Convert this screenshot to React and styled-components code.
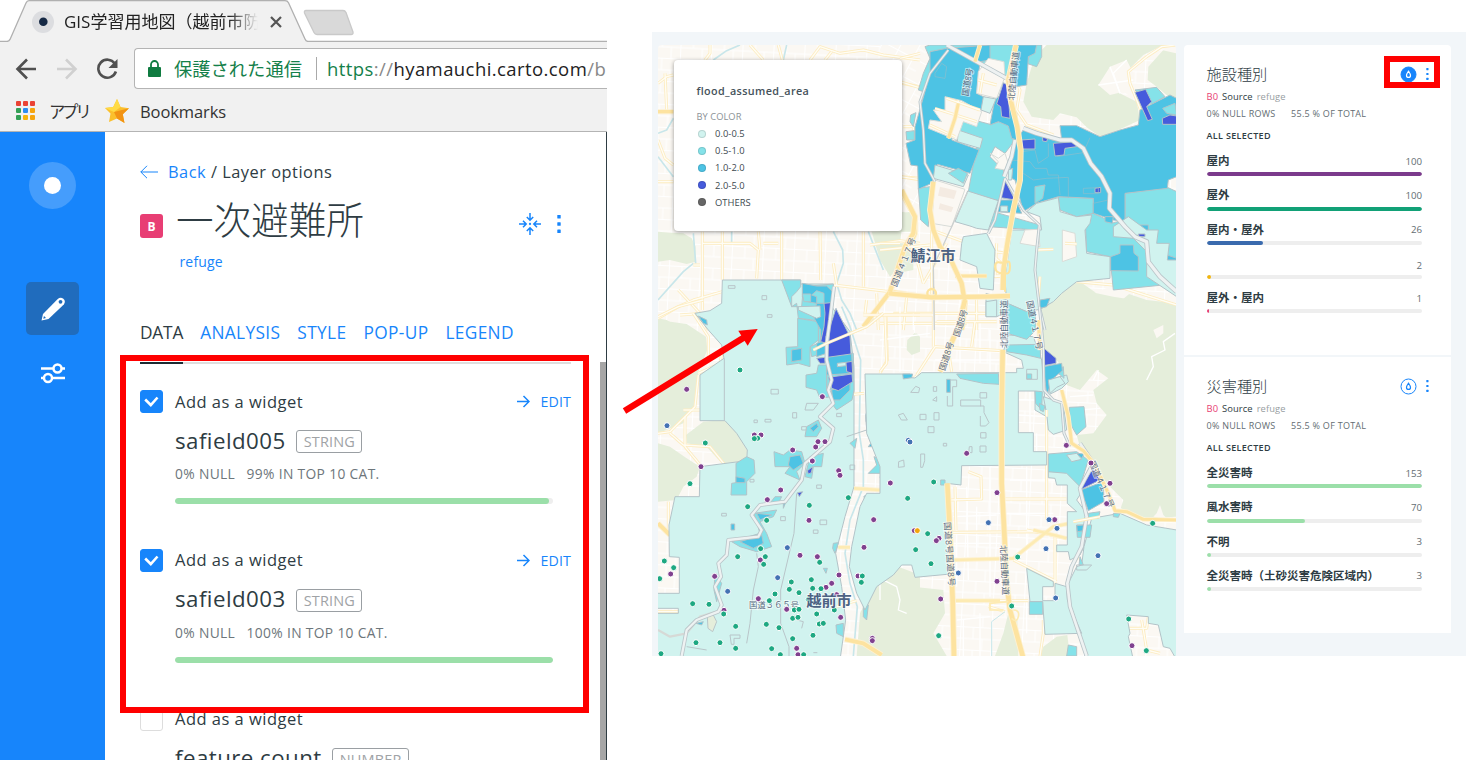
import React from "react";
import styled, { createGlobalStyle } from "styled-components";

const SANS = `"Open Sans", "Noto Sans CJK JP", sans-serif`;
const BLUE = "#1785fb";
const INK = "#2e3c43";

const Global = createGlobalStyle`
  * { box-sizing: border-box; }
  body { margin: 0; background: #fff; font-family: ${SANS}; color: ${INK}; }
  svg { flex: none; }
`;

const Page = styled.div`
  position: relative;
  display: flex;
  align-items: flex-start;
  width: 1466px;
  height: 760px;
  overflow: hidden;
`;

/* ---------- browser window ---------- */

const Browser = styled.section`
  display: flex;
  flex-direction: column;
  width: 607px;
  height: 760px;
  overflow: hidden;
`;

const TabStrip = styled.div`
  display: grid;
  height: 42px;
  > * { grid-area: 1 / 1; }
`;

const TabContent = styled.div`
  display: flex;
  align-items: center;
  padding-left: 32px;
  height: 43px;
`;

const TabTitle = styled.div`
  width: 194px;
  margin: 0 12px 0 10px;
  overflow: hidden;
  white-space: nowrap;
  font-size: 17px;
  line-height: 26px;
  color: #222;
  mask-image: linear-gradient(90deg, #000 85%, transparent 100%);
`;

const Toolbar = styled.div`
  display: flex;
  align-items: center;
  height: 53px;
  padding: 0 0 0 15px;
  background: #f1f1f1;
`;

const NavIcon = styled.svg`
  width: 22px;
  height: 22px;
  margin-right: ${(p) => p.$gap}px;
  fill: none;
  stroke: ${(p) => p.$color || "#505050"};
  stroke-width: 2.6;
`;

const Omnibox = styled.div`
  display: flex;
  align-items: center;
  flex: 1;
  min-width: 0;
  height: 41px;
  padding-left: 13px;
  border: 1px solid #b4b4b4;
  border-width: 1px 0 1px 1.5px;
  border-radius: 4px 0 0 4px;
  background: #fff;
  white-space: nowrap;
  overflow: hidden;
`;

const Secure = styled.span`
  margin-left: 13px;
  padding-right: 14px;
  border-right: 1px solid #aaa;
  font-size: 18.3px;
  line-height: 23px;
  color: #14804a;
`;

const Url = styled.span`
  margin-left: 10px;
  font-size: 18.5px;
  letter-spacing: 0.42px;
  color: #888;
  b { font-weight: 400; color: #222; }
  i { font-style: normal; color: #14804a; }
`;

const Bookmarks = styled.div`
  display: flex;
  align-items: center;
  height: 37px;
  padding: 0 0 4px 16px;
  border-bottom: 1px solid #b4b4b4;
  background: #f1f1f1;
  font-size: 16.5px;
  color: #333;
`;

const AppsGrid = styled.div`
  display: grid;
  grid-template-columns: repeat(3, 5px);
  gap: 2px;
  margin-top: -2px;
  i { height: 5px; border-radius: 1px; }
`;

const AppsLabel = styled.span`
  width: 39px;
  margin: 0 17px 0 14px;
  letter-spacing: -3.4px;
  white-space: nowrap;
`;

const BookmarkLabel = styled.span`
  margin-left: 11px;
  letter-spacing: -0.1px;
`;

const Builder = styled.div`
  display: flex;
  flex: 1;
  min-height: 0;
`;

const SideBar = styled.nav`
  display: flex;
  flex-direction: column;
  align-items: center;
  width: 105px;
  padding-top: 30px;
  background: ${BLUE};
`;

const Brand = styled.div`
  display: grid;
  place-items: center;
  width: 47px;
  height: 47px;
  margin-bottom: 73px;
  border-radius: 50%;
  background: #459dfc;
  i { width: 17px; height: 17px; border-radius: 50%; background: #fff; }
`;

const SideButton = styled.div`
  display: grid;
  place-items: center;
  width: 53px;
  height: 53px;
  margin-bottom: 11px;
  border-radius: 5px;
  background: ${(p) => (p.$active ? "#206cbd" : "transparent")};
`;

const Panel = styled.main`
  flex: 1;
  display: flex;
  flex-direction: column;
  min-width: 0;
  border-right: 1px solid ${INK};
`;

const PanelHead = styled.header`
  display: flex;
  flex-direction: column;
  height: 230px;
  padding: 27px 35px 0;
`;

const Crumb = styled.div`
  display: flex;
  align-items: center;
  height: 25px;
  font-size: 16.4px;
  letter-spacing: 0.5px;
  white-space: pre;
  a { color: ${BLUE}; }
  svg { margin-right: 10px; }
`;

const TitleRow = styled.div`
  display: flex;
  align-items: center;
  height: 50px;
  margin-top: 11px;
`;

const LayerBadge = styled.span`
  display: grid;
  place-items: center;
  width: 23px;
  height: 24px;
  margin: 12px 13px 0 0;
  border-radius: 3px;
  background: #e83e74;
  color: #fff;
  font-size: 12px;
  font-weight: 700;
`;

const Title = styled.h1`
  flex: 1;
  margin: 0;
  font-size: 37.6px;
  line-height: 50px;
  font-weight: 300;
`;

const TitleActions = styled.div`
  display: flex;
  align-items: center;
  gap: 16px;
  margin: 8px 10px 0 0;
`;

const SourceLink = styled.div`
  height: 22px;
  margin: 6px 0 0 39.5px;
  font-size: 14px;
  line-height: 22px;
  letter-spacing: 0.15px;
  color: ${BLUE};
`;

const Tabs = styled.div`
  display: flex;
  gap: 17px;
  margin-top: 48px;
  font-size: 17.3px;
  line-height: 24px;
  white-space: nowrap;
`;

const TabItem = styled.span`
  color: ${(p) => (p.$on ? INK : BLUE)};
  letter-spacing: ${(p) => (p.$on ? -0.2 : 0.36)}px;
`;

const Scroll = styled.div`
  display: flex;
  flex: 1;
  min-height: 0;
`;

const FieldList = styled.div`
  flex: 1;
  padding: 0 29px 0 35px;
  overflow: hidden;
`;

const Rule = styled.div`
  height: 2px;
  background: linear-gradient(90deg, #1d2b33 43px, #dedede 43px);
`;

const ScrollThumb = styled.div`
  width: 6px;
  background: #a6a6a6;
`;

const Field = styled.section`
  height: 158.8px;
  padding-top: 25.5px;
`;

const FieldTop = styled.div`
  display: flex;
  align-items: center;
  height: 24px;
`;

const Check = styled.span`
  display: grid;
  place-items: center;
  width: 23px;
  height: 23px;
  margin-right: 12px;
  border-radius: 3px;
  border: 1px solid ${(p) => (p.$on ? BLUE : "#ddd")};
  background: ${(p) => (p.$on ? BLUE : "#fff")};
`;

const CheckLabel = styled.span`
  flex: 1;
  margin-top: -1px;
  font-size: 16.5px;
  letter-spacing: 0.48px;
`;

const Edit = styled.span`
  display: flex;
  align-items: center;
  gap: 10px;
  font-size: 14.2px;
  letter-spacing: 0.15px;
  color: ${BLUE};
`;

const FieldName = styled.div`
  display: flex;
  align-items: center;
  height: 30px;
  margin: 11.5px 0 9px 35px;
  font-size: 22.3px;
  letter-spacing: 0.45px;
  gap: 10.5px;
`;

const TypeTag = styled.span`
  height: 23px;
  margin-top: 3px;
  padding: 0 6.5px;
  border: 1px solid #9a9fa3;
  border-radius: 3px;
  font-size: 14.5px;
  line-height: 21px;
  letter-spacing: 0.15px;
  color: #a0a3a6;
`;

const FieldStats = styled.div`
  display: flex;
  gap: 11.5px;
  height: 20px;
  margin-left: 35px;
  font-size: 13.8px;
  line-height: 20px;
  letter-spacing: 0.34px;
  color: #6d767b;
  white-space: nowrap;
`;

const Meter = styled.div`
  width: ${(p) => p.$w}px;
  height: ${(p) => p.$h}px;
  margin: ${(p) => p.$margin || 0};
  border-radius: ${(p) => p.$h / 2}px;
  background: #eee;
  overflow: hidden;
  i { display: block; height: 100%; border-radius: inherit; background: ${(p) => p.$color}; }
`;

/* ---------- dashboard ---------- */

const Dashboard = styled.section`
  display: flex;
  gap: 8px;
  width: 814px;
  height: 624px;
  margin: 32px 0 0 45px;
  padding: 13px 15px 0 6px;
  background: #f2f6f9;
`;

const MapFrame = styled.div`
  display: grid;
  width: 518px;
  height: 611px;
  border-radius: 4px 4px 0 0;
  overflow: hidden;
  > * { grid-area: 1 / 1; }
`;

const Legend = styled.aside`
  z-index: 1;
  width: 228.5px;
  height: 171px;
  margin: 15px 0 0 15.5px;
  padding: 20.5px 23px;
  border-radius: 4px;
  background: #fff;
  box-shadow: 0 1px 4px rgba(0, 0, 0, 0.4);
  font-size: 9.4px;
  letter-spacing: 0.05px;
  color: #3d494f;
  h2 { margin: 0; font-size: 10.8px; line-height: 19px; font-weight: 600; letter-spacing: 0.35px; color: #44515a; }
  p { margin: 9.5px 0 1px; line-height: 15px; color: #8b9296; font-size: 9.3px; }
`;

const LegendRow = styled.div`
  display: flex;
  align-items: center;
  gap: 9.5px;
  height: 17.2px;
  padding-left: 1px;
  i { width: 8px; height: 8px; border-radius: 50%; background: ${(p) => p.$color}; border: 1px solid rgba(0, 0, 0, 0.12); }
`;

const Widgets = styled.div`
  display: flex;
  flex-direction: column;
  gap: 2px;
  width: 267px;
  height: 588px;
`;

const Widget = styled.section`
  height: ${(p) => p.$h}px;
  padding: 20px 22px 0 22.5px;
  background: #fff;
  border-radius: ${(p) => (p.$first ? "4px 4px 0 0" : "0")};
`;

const WidgetHead = styled.div`
  display: flex;
  align-items: center;
  gap: 9px;
  height: 18px;
  h3 { flex: 1; margin: -1px 0 0; font-size: 15.2px; line-height: 18px; font-weight: 300; }
`;

const Origin = styled.div`
  display: flex;
  gap: 4px;
  height: 14px;
  margin-top: 6.5px;
  font-size: 9.4px;
  line-height: 14px;
  letter-spacing: 0.08px;
  color: #979ea1;
  b { font-weight: 400; color: #e83e74; }
  span { color: ${INK}; }
`;

const WidgetStats = styled.div`
  display: flex;
  gap: 15.5px;
  height: 14px;
  margin-top: 3px;
  font-size: 9px;
  line-height: 14px;
  letter-spacing: 0.27px;
  color: #636d72;
`;

const Selected = styled.div`
  height: 14px;
  margin-top: 8.5px;
  font-size: 9px;
  line-height: 14px;
  letter-spacing: 0.33px;
  font-weight: 600;
`;

const Category = styled.div`
  padding-top: 10px;
  height: 34.3px;
`;

const CategoryText = styled.div`
  display: flex;
  justify-content: space-between;
  align-items: center;
  width: 215.5px;
  height: 16px;
  padding-top: ${(p) => (p.$unnamed ? 4 : 0)}px;
  margin-bottom: 3.3px;
  font-size: 9.7px;
  color: #636d72;
  b { font-size: 11.5px; line-height: 16px; font-weight: 600; color: ${INK}; }
`;

/* ---------- annotations ---------- */

const RedBox = styled.div`
  position: absolute;
  left: ${(p) => p.$x}px;
  top: ${(p) => p.$y}px;
  width: ${(p) => p.$w}px;
  height: ${(p) => p.$h}px;
  border: 6px solid #f00;
  z-index: 3;
`;

const Arrow = styled.svg`
  position: absolute;
  left: 615px;
  top: 320px;
  z-index: 3;
`;

const DotsIcon = ({ h, r }) => (
  <svg width={r * 2 + 1} height={h} fill={BLUE}>
    {[0, 1, 2].map((i) => (
      <rect key={i} x="0.3" y={i * ((h - 2 * r) / 2)} width={r * 2} height={r * 2} rx={r * 0.3} />
    ))}
  </svg>
);

const DropIcon = ({ on }) => (
  <svg width="17" height="17" viewBox="0 0 17 17" fill="none">
    <circle cx="8.5" cy="8.5" r="7.5" fill={on ? BLUE : "#fff"} stroke={BLUE} />
    <path d="M8.5 5.2C7.4 6.8 6.5 8 6.5 9.4a2 2 0 0 0 4 0C10.5 8 9.6 6.8 8.5 5.2Z" stroke={on ? "#fff" : BLUE} strokeWidth="1.2" />
  </svg>
);

const TILES = { a: [650, 30], b: [880, 30], c: [650, 300], d: [880, 300] };
const Tile = ({ t, children }) => (
  <g transform={`translate(${TILES[t][0]} ${TILES[t][1]}) scale(.33333)`}>{children}</g>
);

const GREEN = "#e5eedb";
const LAND = "#fbf8f3";
const LIGHT = "#d1f3ef";
const MID = "#85e2e9";
const STRONG = "#4dc3e4";
const DEEP = "#465bdc";

const Areas = ({ list, fill, line = "#b3c3c8" }) =>
  list.map((p, i) => <polygon key={i} points={p} fill={fill} stroke={line} strokeWidth={line === "none" ? 0 : 3} />);
const Lines = ({ list, color, w }) => (
  <g fill="none" stroke={color} strokeWidth={w} strokeLinejoin="round">
    {list.map((p, i) => <polyline key={i} points={p} />)}
  </g>
);
const Road = ({ list, w, color = "#fde3a0", edge = "#fdf1d2" }) => (
  <>
    <Lines list={list} color={edge} w={w + 5} />
    <Lines list={list} color={color} w={w} />
  </>
);
const Street = ({ list }) => (
  <>
    <Lines list={list} color="#fdecc0" w={9} />
    <Lines list={list} color="#fffdf5" w={4} />
  </>
);
const River = ({ list, w = 8 }) => (
  <>
    <Lines list={list} color="#b9c5c9" w={w + 5} />
    <Lines list={list} color="#eef2f2" w={w} />
  </>
);

const PURPLE_C = [110,268,517,290,313,405,333,405,504,425,525,425,497,441,428,450,487,483,153,500,566,512,570,526,721,549,392,570,352,599,477,661,671,659,642,742,450,766,502,770,331,780,194,829,62,822,567,825,624,828,545,850,528,862,325,896,410,928,222,931,572,952,440,1045,444,1064,667,1015,667,1022,793,692,560,884];
const GREEN_C = [270,210,166,429,323,415,313,416,120,551,595,593,773,595,478,616,293,620,350,661,797,749,263,770,332,746,346,770,341,793,509,787,43,783,71,803,29,836,484,839,424,846,418,868,488,865,513,866,447,878,375,882,358,902,128,911,177,913,637,828,634,847,221,942,553,930,433,930,447,928,428,955,444,952,500,942,508,972,520,970,257,979,349,973,387,983,489,1006,428,1016,138,1028,210,1028,257,1045,365,1046,33,1061,391,1064,461,1064,475,898];
const BLUE_C = [51,377,775,421,780,426,412,743,383,833,233,874];
const PURPLE_D = [260,460,351,578,559,436,524,659,177,715,169,722,351,844,182,897,690,550,633,489,680,611,756,1037];
const GREEN_D = [161,546,143,701,153,791,413,771,395,918,176,1007,818,670,746,957,799,1052];
const BLUE_D = [325,668,507,659,531,685,498,746,654,767,235,819,527,894];

const Dots = ({ pts, fill }) =>
  pts.filter((_, i) => i % 2 === 0).map((x, i) => (
    <circle key={i} cx={x} cy={pts[i * 2 + 1]} r="9" fill={fill} stroke="#fff" strokeWidth="3" />
  ));

const Label = ({ x, y, r = 0, size = 8.5, weight = 400, fill = "#5b6b80", w, children }) => (
  <text
    transform={`translate(${x} ${y}) rotate(${r})`}
    fontSize={size}
    fontWeight={weight}
    textLength={w}
    textAnchor="middle"
    dominantBaseline="central"
    fill={fill}
    stroke="#fff"
    strokeWidth="2"
    strokeOpacity=".6"
    paintOrder="stroke"
    fontFamily={SANS}
  >
    {children}
  </text>
);

const FloodMap = () => (
  <svg width="518" height="611" viewBox="658 45 518 611">
    <defs>
      <pattern id="blocks" width="31" height="23" patternUnits="userSpaceOnUse" patternTransform="rotate(3)">
        <path d="M0 .5H31M.5 0V23M13 0V12M0 12H31M22 12V23" stroke="#fff" strokeWidth="1" fill="none" />
      </pattern>
      <pattern id="lanes" width="17" height="21" patternUnits="userSpaceOnUse" patternTransform="rotate(28)">
        <path d="M0 .5H17M.5 0V21M0 11H9" stroke="#fff" strokeWidth="1" fill="none" />
      </pattern>
    </defs>
    <rect x="658" y="45" width="518" height="611" fill={LAND} />
    <rect x="658" y="45" width="518" height="611" fill="url(#blocks)" />
    <rect x="880" y="45" width="60" height="170" fill={LAND} />
    <rect x="880" y="45" width="60" height="170" fill="url(#lanes)" />

    <Tile t="a">
      <Areas fill={GREEN} line="none" list={[
        "24,605 60,608 100,610 125,625 137,650 137,695 110,702 60,690 24,695",
        "665,605 755,600 750,640 755,700 720,740 690,690",
        "740,550 785,545 780,600 755,605",
        "24,865 50,870 75,885 24,900",
        "650,860 670,855 672,880 650,882",
      ]} />
      <Lines color="#c8e6ea" w={5} list={[
        "190,90 230,62 270,45", "24,310 50,300 70,265", "24,380 70,440", "130,700 100,725 24,810", "130,610 137,700",
        "400,90 410,45", "245,605 245,640", "550,605 578,660 580,700 560,760 575,810 600,850 620,900", "655,605 700,720",
      ]} />
      <Street list={[
        "180,45 180,70 165,90", "385,45 397,90", "480,90 510,50 570,70 640,60 700,75 810,90", "525,90 545,65", "755,160 810,170",
        "157,605 157,840", "217,605 217,750", "157,640 300,640 325,660 320,745", "395,605 395,750", "510,605 512,750",
        "640,605 640,770", "24,865 85,830 130,810 217,785", "550,765 720,785", "85,780 150,850 175,900", "24,330 45,385 70,405",
        "24,160 50,140 70,135", "660,645 750,632 810,640", "90,855 160,850", "130,705 150,705", "300,45 340,90", "24,455 70,455",
        "45,130 50,240", "325,605 330,660", "550,700 560,765", "680,790 685,900", "755,440 810,445", "760,290 790,290 790,400", "340,640 385,640",
      ]} />
      <Road w={10} list={["24,245 70,245"]} />
      <Road w={12} list={["755,490 795,560 795,610 765,680 720,785 640,890", "720,785 810,800"]} />
    </Tile>

    <Tile t="b">
      <Areas fill={GREEN} line="none" list={[
        "455,110 485,60 500,45 850,45 790,75 750,115 745,150 700,180 740,200 770,215 780,270 720,298 660,320 620,292 590,262 540,250 520,270 455,260 430,215 440,160",
        "805,110 850,60 890,55 890,215 860,195 830,170 803,150",
        "480,840 520,800 560,765 600,755 650,790 700,800 740,790 800,810 890,820 890,905 480,905",
        "0,640 70,640 100,680 100,720 50,730 10,690",
        "0,560 70,545 100,560 100,605 0,605",
      ]} />
      <Areas fill={LAND} line="none" list={["655,165 690,110 740,90 760,130 750,170 760,205 730,185 690,195", "845,60 890,45 890,70", "640,790 690,770 750,790 720,815 660,810"]} />
      <Lines color="#fff" w={4} list={["655,165 760,150", "690,110 720,190", "740,90 700,130 720,190", "830,900 860,865 890,860"]} />
      <Street list={[
        "890,45 845,50 800,80 745,125 750,160 790,260", "400,130 420,180 410,240 440,285 520,315", "590,755 700,765 890,825",
        "0,640 60,640", "155,600 250,635", "0,660 150,645", "160,455 60,440", "60,155 125,175", "60,85 120,70", "40,850 370,850", "0,880 260,880",
        "310,660 380,670", "350,640 345,740 390,735", "230,738 390,738", "320,660 365,700", "100,650 130,760", "155,600 155,800", "80,800 70,900",
        "290,800 290,900", "480,740 480,830", "200,640 130,760",
      ]} />
    </Tile>

    <Tile t="c">
      <Areas fill={GREEN} line="none" list={[
        "24,60 110,72 168,110 172,150 145,215 145,250 135,320 110,340 100,370 24,400",
        "108,405 160,365 225,360 260,395 292,450 288,485 220,495 170,440 110,430",
        "24,430 60,440 110,475 150,500 140,530 100,560 80,600 24,605",
        "75,620 105,618 98,680 78,682",
        "645,960 665,900 700,840 745,800 810,825 810,1068 690,1068 650,1010",
        "775,125 800,100 810,110 810,155 785,165 770,150",
      ]} />
      <Lines color="#c8e6ea" w={5} list={["575,20 600,80 632,180 630,280 628,400 640,480 640,560 600,660 585,760 600,850 622,920 610,1068"]} />
      <Street list={[
        "24,50 85,20 160,0", "145,225 135,320 105,350 60,395 24,400", "60,400 100,435 180,440 225,495", "105,350 105,440 155,500", "100,330 150,330",
        "130,40 175,110 175,180", "145,220 210,190 215,160", "24,935 88,935", "55,605 55,690", "700,40 650,80 530,130", "640,45 810,45", "708,50 712,180 690,220",
        "650,0 645,40", "810,220 790,235",
      ]} />
      <Road w={12} list={["24,670 60,705"]} />
    </Tile>

    <Tile t="d">
      <Areas fill={GREEN} line="none" list={[
        "485,30 520,-20 560,-50 650,-20 700,-10 890,20 890,650 800,655 760,640 722,625 730,600 690,560 640,500 600,440 590,405 640,400 680,345 650,310 640,270 685,235 650,210 600,270 560,255 545,200 530,180 490,140",
        "-60,940 -20,860 30,835 100,860 190,870 195,940 160,1000 200,1068 -70,1068",
        "385,940 412,960 415,1068 345,1068 370,1000",
        "490,1040 530,1010 562,1005 570,1068 480,1068",
        "82,120 105,98 118,120 118,145 95,160 80,145",
      ]} />
      <Areas fill={LAND} line="none" list={["820,90 850,75 850,100 830,115", "830,640 840,615 850,645 860,655 820,650"]} />
      <Lines color="#fff" w={4} list={[
        "885,100 850,125 855,150 815,170 820,200 800,240", "570,290 640,285", "600,330 660,325", "655,210 640,240", "0,835 30,850 50,860 60,900 55,930 80,940", "0,850 0,900",
        "230,500 230,860", "260,560 265,840", "290,620 290,760", "330,500 330,890", "220,650 350,645", "220,730 360,730", "440,500 440,760", "390,540 560,540",
        "380,640 520,640", "250,960 250,1068", "230,960 330,950", "300,940 300,1068", "440,900 440,1000", "415,300 490,300", "415,345 500,350", "450,275 450,400", "470,400 470,455",
        "60,20 60,215", "100,40 100,90", "0,120 150,100", "240,0 240,210", "300,60 300,190", "330,90 330,215", "165,180 360,180",
      ]} />
      <Street list={[
        "0,45 160,45", "165,140 370,152", "170,65 350,65", "160,-40 160,140", "205,150 215,215", "285,65 275,140", "15,50 20,190 0,215", "165,140 110,225",
        "210,600 305,597 303,530 265,515", "225,560 228,690", "215,697 500,695", "560,715 440,690", "370,597 560,597", "400,780 530,845", "525,700 525,860", "500,330 500,660",
        "225,902 445,902", "480,1068 490,1000 490,960", "325,920 375,935", "740,985 800,985 805,950", "785,960 800,1050 840,1060", "590,780 600,740",
      ]} />
      <Road w={8} color="#fdebb3" list={["220,780 400,775 450,735 520,680 620,660", "460,690 560,715", "225,902 360,902"]} />
    </Tile>

    {/* flood depth bands */}
    <Tile t="c">
      <Areas fill={LIGHT} list={[
        "217,-60 452,-60 452,-48 550,-48 545,20 600,95 612,200 612,560 585,650 557,760 575,860 587,960 570,1080 10,1080 10,940 85,940 85,925 10,925 10,880 88,880 88,772 58,770 57,675 75,590 148,590 150,500 290,482 292,450 260,400 225,362 150,362 150,225 222,175 215,135 175,90 135,40 180,32 215,10",
      ]} />
      <Areas fill={MID} list={[
        "395,-60 452,-60 452,-40 440,-25 425,-10 425,20 455,20 460,-40 550,-48 545,20 530,130 520,160 485,170 480,140 505,130 505,80 490,60 445,55 440,10 425,20",
        "443,55 505,65 505,120 480,140 480,200 445,190 410,195 408,142 443,140",
        "530,165 610,160 612,270 606,300 560,330 545,310 545,270 530,260",
        "468,225 500,220 505,195 530,195 530,270 545,290 510,295 500,270 468,262",
        "470,380 505,360 515,385 500,410 465,410",
        "372,455 400,465 420,450 455,455 465,490 440,515 450,540 405,520 420,500 375,500",
        "258,490 290,470 312,480 315,520 290,545 290,585 243,585 245,550 258,548",
        "480,470 520,460 515,500 490,500 485,535 465,530",
        "312,640 380,630 370,650 330,665 350,700 365,740 320,755 270,740 245,725 330,700",
        "375,590 395,590 385,610 360,610", "195,820 215,850 200,905 192,870", "655,322 688,325 686,380 650,390 647,345",
        "672,470 697,480 695,520 655,520 680,495", "642,588 690,585 660,640 675,700 665,750 608,740 620,680 650,660",
        "600,430 620,415 615,445", "650,230 665,240 650,262", "520,805 532,805 528,820", "558,975 580,970 580,1010 560,1000", "640,905 655,915 650,960 640,950", "550,730 565,728 555,760 548,745",
      ]} />
      <Areas fill={STRONG} list={[
        "457,-50 500,-42 530,-42 548,-25 540,50 530,150 510,150 512,90 490,50 500,10 470,5 457,-10",
        "145,48 170,60 172,75 160,70", "500,130 530,120 530,160 500,170", "425,150 455,145 455,180 425,185",
        "530,165 605,160 608,220 530,225", "545,270 600,250 600,270 570,300 548,300", "420,470 450,465 460,490 430,510 415,495", "258,530 285,535 285,548 258,548",
        "480,385 500,370 505,380 490,395", "270,725 335,705 340,730 310,745", "320,640 365,645 330,660", "243,672 254,672 254,690 243,690",
        "648,350 685,335 680,370 648,365", "640,630 675,610 660,640", "625,680 650,660 650,705 615,715", "655,710 675,705 670,725", "655,440 670,420 674,440", "400,610 410,600 400,625", "138,970 160,965 155,975", "760,222 780,222 785,235 765,232",
      ]} />
      <Areas fill={MID} list={["485,-15 500,-28 522,-20 522,10 500,10 500,-10", "457,-18 482,-18 482,5 462,5"]} />
      <Areas fill={LIGHT} list={["562,190 588,187 588,197 562,200", "445,20 510,18 512,50 500,55 445,30"]} />
      <Areas fill={DEEP} list={[
        "522,10 543,8 538,90 528,110 530,130 512,125 522,80 525,40",
        "558,25 585,80 600,110 603,162 532,172 540,80", "588,187 606,184 608,220 590,215", "535,232 606,222 608,245 565,272 545,265", "500,175 525,172 525,190 510,190",
        "472,512 488,500 484,518 475,522", "442,578 458,575 448,590",
      ]} />
      <g fill="none" stroke="#b9c5c9" strokeWidth="3">
        <path d="M235-43h20v8h-20zM336-13h14v12h-14zM352 44h14v8h-14zM223 175V360M363 268h22v14h-22zM470 310h35l-15 20h-25zM428 338h12v16h-12zM345 358h18v8h-18zM312 360h10v8h-10zM455 380h14v10h-14zM560 340h14v10h-14zM500 555h14v10h-14zM392 650h14v12h-14zM510 660h20v14h-20zM490 690h14v10h-14zM300 538h12v8h-12zM240 1005h30v10h-18v18h-8zM490 1058h12M600 495h14v14h-14zM590 410l60-20M320 760l5 40-15 70-10 100-10 60M440 580l-8 120-40 170v100l25 70v30M650 390l40 100M110 1040l60 10M648 780l30 5-20 25 25 15-15 20M215 640h14v8h-14zM440 960l20 5-5 20" />
        <path d="M745 345l15-8 10 20-20 5zM785 260l20-2 3 20-20 4zM690 530l20 0 5 40-15 0zM745 490h18v14h-18z" />
      </g>
      <path d="M172 950l18-5 10 20-12 30-14-10z" fill="#e5eedb" stroke="#b9c5c9" strokeWidth="3" />
      <Lines color="#d6d9d6" w={7} list={["24,990 60,1010 110,1000 150,950 215,930"]} />
      <River list={["552,-40 540,60 530,130 530,180 545,240 535,270 550,310 510,350 550,385 540,425 465,490 455,540 405,605 330,615 305,645 335,690 325,710 235,720 230,765 205,790 213,830 195,860 215,915 205,935 140,960 110,990 95,1068"]} w={7} />
      <Street list={["700,40 650,80 530,130 490,150", "612,283 642,280", "620,902 560,920"]} />
      <Road w={8} list={["565,742 600,742", "612,565 690,570"]} color="#fdebb3" />
      <Road w={12} list={["585,1018 640,1030 695,1065"]} />
    </Tile>

    <Tile t="b">
      <Areas fill={MID} list={[
        "135,50 150,45 410,45 385,140 330,125 300,90 245,105 210,90 150,130 130,185 115,180 130,130 150,85",
        "245,260 330,283 360,275 395,290 405,330 375,370 345,350 330,380 370,420 378,450 355,512 265,485 290,350 225,330",
        "78,305 103,302 103,330 80,330", "115,475 150,470 145,590 122,570 118,510", "92,255 108,248 100,290 90,275",
        "335,545 350,548 480,585 470,600 325,590",
        "460,45 485,45 485,80 470,110 440,100",
        "735,490 862,472 890,485 890,780 850,765 700,780 690,680 620,665 615,555 640,550 700,578 735,570",
        "765,180 830,172 855,200 815,222", "535,500 640,505 640,550 590,560 540,540",
      ]} />
      <Areas fill={STRONG} list={[
        "150,65 200,55 330,45 330,90 300,95 290,190 320,205 310,240 270,232 240,265 215,330 297,360 270,430 172,403 155,460 115,478 113,408 92,405 78,340 105,330 105,290 125,220 150,130",
        "410,45 470,45 465,70 445,80 440,165 408,170 395,130", "330,285 345,205 380,190 410,250 412,330 395,325 385,288 355,275", "355,510 408,510 425,550 345,545",
        "408,330 430,300 520,330 545,330 540,287 590,287 660,320 720,300 775,285 780,240 870,195 890,205 890,440 865,450 862,475 735,490 735,575 700,570 640,550 640,505 535,500 470,520 430,545 405,450 385,440 395,390",
        "692,680 720,670 720,645 760,645 762,670 775,680 775,723 692,722", "862,675 890,685 890,740 862,735", "775,585 805,585 805,605 775,605", "675,560 700,560 697,580 675,575",
        "810,670 860,690 855,700 810,685", "480,815 510,805 505,825 480,835", "415,630 440,645 470,645 450,665 420,660",
      ]} />
      <Areas fill={LIGHT} list={[
        "165,405 265,435 250,470 160,445", "235,300 308,325 300,355 232,335", "310,200 348,207 330,250 303,240", "263,483 355,512 325,600 290,595 270,588 225,575",
        "470,520 535,503 540,545 590,560 635,555 630,580 615,600 620,670 690,680 690,745 590,755 545,790 520,815 480,838 440,845 380,820 375,745 395,600 485,600 480,560 440,545",
        "250,620 320,610 345,660 340,780 300,775 290,710 240,690 245,640", "700,590 745,560 800,600 835,600 830,640 868,640 862,690 890,690 890,800 800,740 800,665 760,625 700,620",
        "362,528 383,528 383,545 362,545", "318,790 383,810 383,845 350,860 318,860", "385,420 398,415 395,450 385,450",
      ]} />
      <Areas fill={MID} list={["205,430 235,415 262,430 250,460", "180,290 208,275 205,305 185,305", "848,235 885,220 890,255 860,250", "465,470 495,465 488,505 465,520"]} />
      <Areas fill={LAND} line="#d8dcd8" list={[
        "195,200 245,212 305,245 290,290 250,275 230,330 145,295 150,270 185,275 160,240 195,240", "325,85 372,95 375,140 350,205 290,190 295,125",
        "165,450 255,478 215,590 155,580", "547,600 585,610 590,680 547,695", "435,600 475,598 480,650 420,640", "330,370 355,385 375,370 385,400 375,420 345,415 355,395",
      ]} />
      <g fill="#f4ebe2">
        <path d="M180 470l50 12-8 25-48-10zM180 520l40 12-6 15-38-10z" />
      </g>
      <Areas fill={DEEP} list={[
        "370,158 383,165 390,265 365,260 362,230 350,222", "374,448 405,510 362,503", "425,330 465,327 465,357 427,357", "488,320 503,325 500,335 488,333",
        "520,340 585,335 590,350 555,355 552,375 525,378", "765,187 797,178 815,215 800,230 817,268 803,272", "847,265 870,255 890,258 890,283 848,283",
        "645,475 662,472 662,488 645,488", "775,612 795,612 795,620 775,620",
      ]} />
      <g fill="none" stroke="#8fbecb" strokeWidth="2">
        <path d="M425 365l40-5 10 40 30-20 0-40M390 390l60 5 15 20h35l5 20h30l5 60M430 430l30 20 40-5 65-3v60M530 380l80-12 20-45M610 475l45-2v18h-45zM165 130l20-30 15 10-5 35-30-5zM640 550v-30l45-10" />
      </g>
      <Street list={["235,212 225,260 205,325", "200,205 300,240", "165,235 290,275", "150,285 225,320", "467,660 520,658", "555,640 590,642", "310,130 300,190", "295,150 350,165", "480,740 475,800"]} />
      <River w={4} list={["205,60 150,130 120,215 130,300 135,400 165,455"]} />
      <River w={9} list={["200,45 290,95 380,145", "405,330 395,380 372,440"]} />
      <River w={4} list={["375,445 430,540 478,585 470,660 465,720 478,830 495,900", "375,445 345,570 325,610"]} />
      <Lines color="#ccd0cf" w={4} list={["262,488 215,590 160,710 163,900"]} />
      <River w={10} list={["430,295 470,310 540,330 575,330 610,355 632,400 665,440 690,490 688,535 735,590 765,620 800,635 805,695 840,740 890,785"]} />
      <Road w={9} list={["300,45 285,95", "235,220 225,265 205,325", "225,738 320,738"]} />
      <Road w={13} list={[
        "408,45 385,150 392,210 412,290 422,360 420,450 400,540 382,640 370,720 368,780",
        "160,455 150,540 160,600 180,650 215,695 245,760 255,820 245,900",
        "65,480 105,560 100,610 75,650 30,785", "25,790 155,802 320,800 390,798",
      ]} />
      <path d="M375 785V700q15-15 15 10t-15 20M370 700q-25-10-25 10t25 20" fill="none" stroke="#fde49f" strokeWidth="6" />
      <circle cx="155" cy="790" r="13" fill="none" stroke="#fde49f" strokeWidth="7" />
    </Tile>

    <Tile t="d">
      <Areas fill={LIGHT} list={[
        "-45,222 70,222 78,232 105,234 125,218 410,218 410,205 430,205 425,180 370,155 385,105 460,110 485,180 492,270 500,350 465,330 465,273 415,273 415,398 460,398 460,455 500,455 500,495 245,497 243,555 200,550 212,822 105,832 95,795 65,795 40,825 -10,860 -45,930 -70,880 -92,800 -85,740 -60,620 -40,580 0,580 0,500 -40,400",
        "490,290 550,310 560,390 520,403 505,390 500,340", "505,515 600,515 615,560 590,600 620,640 612,740 600,765 570,780 565,755 530,755 530,735 562,735 562,635 590,635 562,610 562,555 530,555 525,535 505,533",
        "605,795 612,740 635,655 720,640 800,675 890,690 890,1080 870,1045 850,1040 835,975 805,970 805,950 740,945 750,1000 745,1010 760,1080 620,1080 565,900 560,860 590,800",
        "440,805 520,845 520,860 488,860 488,902 525,902 525,850 560,860 562,900 605,1000 495,1003 488,905 450,905", "500,240 560,225 565,245 545,265 505,285", "318,5 350,0 350,50 318,50",
      ]} />
      <Areas fill={MID} list={[
        "383,10 440,35 465,20 468,90 440,118 383,100", "380,135 480,133 482,175 440,165 380,155", "230,222 355,220 358,253 310,250 240,235", "465,273 487,275 485,330 467,310",
        "505,462 590,455 625,480 600,560 560,520 505,515", "568,322 612,320 618,380 590,405 570,370", "448,905 488,905 488,943 448,943", "182,540 195,540 195,555 182,555",
        "590,675 635,675 630,712 592,712", "565,1035 590,1040 590,1068 560,1068", "625,640 660,635 655,655 625,655", "440,222 455,222 455,237 440,237", "600,770 610,795 597,795", "478,310 495,318 490,335 480,330", "700,640 720,640 715,652 700,650", "530,215 550,200 552,235",
      ]} />
      <Areas fill={STRONG} list={[
        "490,200 545,190 547,212 520,235 500,285", "602,570 670,545 672,605 625,632", "590,677 612,675 612,692 592,695", "480,0 510,-5 500,20 480,25", "590,460 612,462 605,475", "68,222 98,222 95,233 70,237", "200,238 211,238 211,277 200,277",
      ]} />
      <Areas fill={LIGHT} list={["505,240 540,230 555,250 530,262 510,280", "560,465 590,460 605,478 575,485"]} />
      <Areas fill={DEEP} list={["490,143 528,175 528,190 490,197", "638,505 660,535 650,545 600,570"]} />
      <g fill="none" stroke="#b9c5c9" strokeWidth="3">
        <path d="M92 277l15-18 12 5-3 14zM160 260h10v14h-10zM158 300l12-10v14zM213 240h17v20h-12v58h-16v-30M242 300h60v18h-60zM300 278h20v16h-20zM300 318h12v20l15 30-10 10h-16v-30M302 398h16v16h-16zM300 438h18v18h-18zM120 343h18v16h-18zM162 338l15 0 0 22h-15zM144 380h18v18h-18zM55 345l15-5 12 20h-18zM122 462h12v20l-6 20h-6zM56 485l15-5 2 20-18 2zM190 430l10 0 0 8h-10zM268 440h8v18h-10zM440 208h32v30h-32zM590 795h45l-15 15h-30z" />
      </g>
      <River w={4} list={["478,20 490,140 492,270 520,300 550,310", "545,310 552,400 570,440"]} />
      <River w={8} list={["600,430 640,490 600,565 620,650 605,740 575,800 562,850 570,920 620,1068"]} />
      <Street list={["500,330 500,350", "660,650 580,665"]} />
      <Road w={14} list={[
        "368,150 365,350 365,550 373,700 380,850 390,930 430,1075", "202,550 210,700 218,900 222,1075", "255,0 235,80 205,150 180,215",
      ]} />
      <Road w={9} list={["475,60 480,150", "545,270 565,350 575,430 610,452 645,495 685,580 705,632 740,635 790,658 890,660"]} />
      <path d="M400 930q20 0 15 20t-20 5M385 905l-55 5v20h40" fill="none" stroke="#fdebb3" strokeWidth="5" />
      <path d="M375 935l-40 30v110" fill="none" stroke="#c8e6ea" strokeWidth="3" />
    </Tile>

    <Label x="967" y="82" r="-80" w="28">国道8号</Label>
    <Label x="1013" y="76" r="-84" w="49">北陸自動車道</Label>
    <Label x="903" y="262" r="-68" w="52">国道４１７号</Label>
    <Label x="960" y="323" r="-72" w="28">国道8号</Label>
    <Label x="946" y="356" r="-72" w="30">国道8号</Label>
    <Label x="1003" y="324" r="-90" w="48">北陸自動車道</Label>
    <Label x="1035" y="325" r="78" w="50">国道４１７号</Label>
    <Label x="1102" y="484" r="66" w="50">国道４１７号</Label>
    <Label x="950" y="554" r="86" w="64">国道8号国道8号</Label>
    <Label x="1005" y="570" r="87" w="50">北陸自動車道</Label>
    <Label x="774" y="604" w="50">国道３６５号</Label>

    <Tile t="c">
      <Dots pts={PURPLE_C} fill="#80418f" />
      <Dots pts={GREEN_C} fill="#1ea882" />
      <Dots pts={BLUE_C} fill="#4372b3" />
      <Dots pts={[802, 692]} fill="#f2a60d" />
    </Tile>
    <Tile t="d">
      <Dots pts={PURPLE_D} fill="#80418f" />
      <Dots pts={GREEN_D} fill="#1ea882" />
      <Dots pts={BLUE_D} fill="#4372b3" />
    </Tile>
    <Label x="933" y="254.5" size="15" w="45" weight="600" fill="#4c6283">鯖江市</Label>
    <Label x="829" y="600" size="15" w="45" weight="600" fill="#4c6283">越前市</Label>
  </svg>
);

/* ---------- data ---------- */

const FIELDS = [
  { name: "safield005", type: "STRING", on: true, pct: 99, stats: ["0% NULL", "99% IN TOP 10 CAT."] },
  { name: "safield003", type: "STRING", on: true, pct: 100, stats: ["0% NULL", "100% IN TOP 10 CAT."] },
  { name: "feature count", type: "NUMBER", on: false },
];

const WIDGETS = [
  {
    title: "施設種別", on: true, h: 310,
    rows: [["屋内", 100, 100, "#7b3a8c"], ["屋外", 100, 100, "#12a177"], ["屋内・屋外", 26, 26, "#3a6bae"], ["", 2, 2.3, "#f2b50d"], ["屋外・屋内", 1, 1, "#e83e74"]],
  },
  {
    title: "災害種別", h: 276,
    rows: [["全災害時", 153, 100, "#9bdfa9"], ["風水害時", 70, 45.7, "#9bdfa9"], ["不明", 3, 2, "#9bdfa9"], ["全災害時（土砂災害危険区域内）", 3, 2, "#9bdfa9"]],
  },
];

const LEGEND = [["0.0-0.5", LIGHT], ["0.5-1.0", MID], ["1.0-2.0", STRONG], ["2.0-5.0", DEEP], ["OTHERS", "#666"]];
const APP_COLORS = ["#ea4335", "#ea4335", "#ea4335", "#34a056", "#2d8cf0", "#f5a50f", "#34a056", "#f5b50f", "#f5a50f"];

export default function App() {
  return (
    <>
      <Global />
      <Page>
        <Browser>
          <TabStrip>
            <svg width="607" height="42" stroke="#b0b0b0" strokeWidth="1.3">
              <path d="M-2 41.4H7q2 0 3-2L26 3q1-2.3 3-2.3H285q2.500 0 3.500 2L305 39q1 2.400 3 2.400H610V50H-2Z" fill="#f1f1f1" />
              <path d="M306 10.500H343q2 0 3 2L353 32q.6 2.500-2 2.500H317q-2 0-3-2L304.500 13q-.6-2.500 1.500-2.500Z" fill="#d9d9d9" stroke="#c9c9c9" />
            </svg>
            <TabContent>
              <svg width="22" height="22"><circle cx="11" cy="11" r="11" fill="#dcdde0" /><circle cx="11.300" cy="10.800" r="4.300" fill="#162945" /></svg>
              <TabTitle>GIS学習用地図（越前市防</TabTitle>
              <svg width="12" height="12" stroke="#555" strokeWidth="2.200"><path d="M1 1l10 10M11 1L1 11" /></svg>
            </TabContent>
          </TabStrip>
          <Toolbar>
            <NavIcon viewBox="0 0 22 22" $gap={19}><path d="M21 11H2.500M12 1.500L2.500 11l9.500 9.500" /></NavIcon>
            <NavIcon viewBox="0 0 22 22" $gap={18} $color="#d0d0d0"><path d="M1 11h18.500M10 1.500l9.500 9.500-9.500 9.500" /></NavIcon>
            <NavIcon viewBox="0 0 22 22" $gap={16}><path d="M18.800 5.600A9 9 0 1 0 19.900 13.500" /><path d="M21.500 1v9h-9z" fill="#505050" stroke="none" /></NavIcon>
            <Omnibox>
              <svg width="13" height="17"><rect y="7" width="13" height="10" rx="1" fill="#0f7b40" /><path d="M3 8V4.500a3.500 3.500 0 0 1 7 0V8" fill="none" stroke="#0f7b40" strokeWidth="1.800" /></svg>
              <Secure>保護された通信</Secure>
              <Url><i>https</i>://<b>hyamauchi.carto.com</b>/bu</Url>
            </Omnibox>
          </Toolbar>
          <Bookmarks>
            <AppsGrid>{APP_COLORS.map((c, i) => <i key={i} style={{ background: c }} />)}</AppsGrid>
            <AppsLabel>アプリ</AppsLabel>
            <svg width="24" height="24" viewBox="0 0 24 24">
              <path d="M12 0l3.500 8L24 9.200l-6.200 6L19.500 24 12 19.500 4 23l1.500-8.500L0 9l8.200-1z" fill="#fbc02d" />
              <path d="M24 9.200l-6.200 6L19.500 24 12 19.500 9 13z" fill="#f29314" />
              <path d="M12 0l3.500 8L9 13 0 9l8.200-1z" fill="#ffdb45" />
            </svg>
            <BookmarkLabel>Bookmarks</BookmarkLabel>
          </Bookmarks>
          <Builder>
            <SideBar>
              <Brand><i /></Brand>
              <SideButton $active>
                <svg width="26" height="26" viewBox="0 0 26 26">
                  <path d="M1.500 24.500L3 18 17.500 3.200q3-2.700 5.800-.4t.5 5.700L8.500 23z" fill="#fff" />
                  <circle cx="20.500" cy="5.800" r="1.900" fill="#206cbd" /><path d="M4 20l2 2-2.800.7z" fill="#206cbd" />
                </svg>
              </SideButton>
              <SideButton>
                <svg width="24" height="22" viewBox="0 0 24 22" fill="none" stroke="#fff" strokeWidth="2.500">
                  <path d="M0 6.500h12M20 6.500h4M0 16h3M11 16h13" /><circle cx="16.500" cy="6.500" r="4" /><circle cx="7" cy="16" r="4" />
                </svg>
              </SideButton>
            </SideBar>
            <Panel>
              <PanelHead>
                <Crumb>
                  <svg width="18" height="14" fill="none" stroke={BLUE} strokeWidth="1"><path d="M18 7H.8M7 .8L.8 7 7 13.200" /></svg>
                  <a>Back</a> / Layer options
                </Crumb>
                <TitleRow>
                  <LayerBadge>B</LayerBadge>
                  <Title>一次避難所</Title>
                  <TitleActions>
                    <svg width="22" height="22" viewBox="0 0 22 22" fill="none" stroke={BLUE} strokeWidth="1.500">
                      {[0, 90, 180, 270].map((a) => <path key={a} transform={`rotate(${a} 11 11)`} d="M11 0v7M7.800 4L11 7.200l3.200-3.200" />)}
                      <circle cx="11" cy="11" r=".4" />
                    </svg>
                    <DotsIcon h={18} r={1.7} />
                  </TitleActions>
                </TitleRow>
                <SourceLink>refuge</SourceLink>
                <Tabs>
                  <TabItem $on>DATA</TabItem><TabItem>ANALYSIS</TabItem><TabItem>STYLE</TabItem><TabItem>POP-UP</TabItem><TabItem>LEGEND</TabItem>
                </Tabs>
              </PanelHead>
              <Scroll>
                <FieldList>
                  <Rule />
                  {FIELDS.map((f) => (
                    <Field key={f.name}>
                      <FieldTop>
                        <Check $on={f.on}>{f.on && <svg width="15" height="11" fill="none" stroke="#fff" strokeWidth="2.600"><path d="M1.200 3.500l5.600 5.500L13.500 1.500" /></svg>}</Check>
                        <CheckLabel>Add as a widget</CheckLabel>
                        {f.on && <Edit><svg width="13" height="13" fill="none" stroke={BLUE} strokeWidth="1.500"><path d="M0 6.500h12M6.500 1L12 6.500 6.500 12" /></svg>EDIT</Edit>}
                      </FieldTop>
                      <FieldName>{f.name}<TypeTag>{f.type}</TypeTag></FieldName>
                      {f.on && <FieldStats>{f.stats.map((s) => <span key={s}>{s}</span>)}</FieldStats>}
                      {f.on && <Meter $w={378} $h={6} $color="#9bdfa9" $margin="14px 0 0 35px"><i style={{ width: `${f.pct}%` }} /></Meter>}
                    </Field>
                  ))}
                </FieldList>
                <ScrollThumb />
              </Scroll>
            </Panel>
          </Builder>
        </Browser>

        <Dashboard>
          <MapFrame>
            <FloodMap />
            <Legend>
              <h2>flood_assumed_area</h2>
              <p>BY COLOR</p>
              {LEGEND.map(([t, c]) => <LegendRow key={t} $color={c}><i />{t}</LegendRow>)}
            </Legend>
          </MapFrame>
          <Widgets>
            {WIDGETS.map((w, i) => (
              <Widget key={w.title} $h={w.h} $first={i === 0}>
                <WidgetHead><h3>{w.title}</h3><DropIcon on={w.on} /><DotsIcon h={12} r={1.1} /></WidgetHead>
                <Origin><b>B0</b><span>Source</span>refuge</Origin>
                <WidgetStats><span>0% NULL ROWS</span><span>55.5 % OF TOTAL</span></WidgetStats>
                <Selected>ALL SELECTED</Selected>
                {w.rows.map(([label, n, pct, color]) => (
                  <Category key={label}>
                    <CategoryText $unnamed={!label}><b>{label}</b>{n}</CategoryText>
                    <Meter $w={215.5} $h={4} $color={color}><i style={{ width: `${pct}%` }} /></Meter>
                  </Category>
                ))}
              </Widget>
            ))}
          </Widgets>
        </Dashboard>

        <RedBox $x={120} $y={355} $w={469} $h={358} />
        <RedBox $x={1384} $y={56} $w={56} $h={32} />
        <Arrow width="150" height="100">
          <path d="M9.500 91L129 17.500" stroke="#f00" strokeWidth="6.400" />
          <path d="M123.300 10.700L142.700 9L132.700 25.700Z" fill="#f00" />
        </Arrow>
      </Page>
    </>
  );
}
